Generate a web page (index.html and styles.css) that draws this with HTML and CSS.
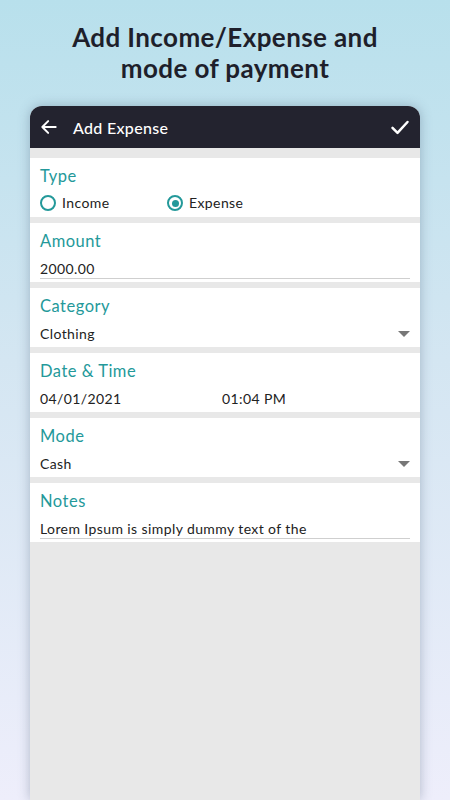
FILE: index.html
```html
<!DOCTYPE html>
<html lang="en">
<head>
    <meta charset="UTF-8">
    <meta name="viewport" content="width=device-width, initial-scale=1.0">
    <title>Add Expense</title>
    <link rel="stylesheet" href="styles.css">
</head>
<body>
    <h1 class="headline">Add Income/Expense and<br>mode of payment</h1>

    <div class="phone">
        <div class="toolbar">
            <svg class="icon" width="20" height="20" viewBox="0 0 24 24">
                <path d="M20 12H5M11 5l-7 7 7 7" fill="none" stroke="#fff" stroke-width="2.4" stroke-linecap="round" stroke-linejoin="round"/>
            </svg>
            <span class="toolbar-title">Add Expense</span>
            <svg class="icon check" width="20" height="20" viewBox="0 0 24 24">
                <path d="M3 13l6 6L21 6" fill="none" stroke="#fff" stroke-width="3" stroke-linecap="round" stroke-linejoin="round"/>
            </svg>
        </div>

        <div class="form">
            <div class="field">
                <div class="label">Type</div>
                <div class="radios">
                    <label class="radio"><span class="dot"></span>Income</label>
                    <label class="radio checked"><span class="dot"></span>Expense</label>
                </div>
            </div>

            <div class="field">
                <div class="label">Amount</div>
                <div class="value underline">2000.00</div>
            </div>

            <div class="field">
                <div class="label">Category</div>
                <div class="value select">Clothing<span class="caret"></span></div>
            </div>

            <div class="field">
                <div class="label">Date &amp; Time</div>
                <div class="value datetime">
                    <span class="date">04/01/2021</span>
                    <span>01:04 PM</span>
                </div>
            </div>

            <div class="field">
                <div class="label">Mode</div>
                <div class="value select">Cash<span class="caret"></span></div>
            </div>

            <div class="field">
                <div class="label">Notes</div>
                <div class="value underline">Lorem Ipsum is simply dummy text of the</div>
            </div>
        </div>
    </div>
</body>
</html>
```

FILE: styles.css
```css
html, body {
    height: 100%;
}

body {
    margin: 0;
    overflow: hidden;
    font-family: 'Lato', 'Noto Sans', sans-serif;
    background: linear-gradient(180deg, #b8e0ec 0%, #d4e6f2 45%, #eeeefb 100%);
    color: #222;
}

.headline {
    margin: 0;
    padding-top: 22px;
    text-align: center;
    font-size: 26px;
    line-height: 31px;
    font-weight: 700;
    letter-spacing: 0.4px;
    color: #1e1f2b;
}

.phone {
    margin: 22px 30px 0;
    height: 694px;
    background-color: #e8e8e8;
    border-radius: 12px 12px 0 0;
    overflow: hidden;
    box-shadow: 0 0 12px rgba(60, 80, 110, 0.35);
}

.toolbar {
    height: 42px;
    background-color: #23232f;
    display: flex;
    align-items: center;
    padding: 0 10px 0 9px;
    color: #fff;
}

.toolbar-title {
    flex-grow: 1;
    margin-left: 14px;
    font-size: 16px;
    font-weight: 500;
    letter-spacing: 0.3px;
}

.form {
    padding-top: 10px;
    display: flex;
    flex-direction: column;
    gap: 6px;
}

.field {
    background-color: #fff;
    height: 59px;
    padding: 8px 10px 0 10px;
    box-sizing: border-box;
}

.label {
    font-size: 16.5px;
    line-height: 20px;
    letter-spacing: 0.5px;
    color: #24999a;
}

.value {
    margin-top: 8px;
    font-size: 14px;
    line-height: 20px;
    letter-spacing: 0.4px;
    color: #222;
}

.value.underline {
    border-bottom: 1px solid #cfcfcf;
    line-height: 19px;
}

.value.select {
    display: flex;
    justify-content: space-between;
    align-items: center;
}

.caret {
    width: 0;
    height: 0;
    border-left: 6px solid transparent;
    border-right: 6px solid transparent;
    border-top: 6px solid #777;
}

.datetime .date {
    display: inline-block;
    width: 178px;
}

.radios {
    display: flex;
    margin-top: 7px;
}

.radio {
    display: flex;
    align-items: center;
    font-size: 14px;
    line-height: 20px;
    letter-spacing: 0.4px;
    width: 127px;
}

.dot {
    width: 12px;
    height: 12px;
    border: 2px solid #24999a;
    border-radius: 50%;
    margin-right: 6px;
    box-sizing: content-box;
    position: relative;
}

.radio.checked .dot::after {
    content: "";
    position: absolute;
    left: 2.5px;
    top: 2.5px;
    width: 7px;
    height: 7px;
    border-radius: 50%;
    background-color: #24999a;
}
```
